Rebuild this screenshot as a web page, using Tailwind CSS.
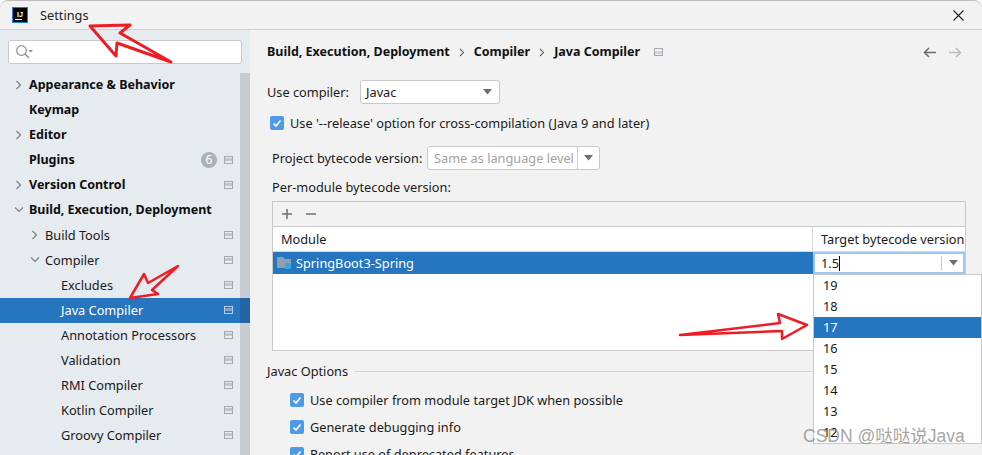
<!DOCTYPE html>
<html lang="en">
<head>
  <meta charset="UTF-8">
  <title>Settings</title>
  <script src="https://cdn.jsdelivr.net/npm/@tailwindcss/browser@4"></script>
</head>
<body class="relative w-[982px] h-[455px] overflow-hidden bg-white text-[12.75px] leading-[18px] text-[#1a1a1a] font-['Noto_Sans','Noto_Sans_CJK_SC',sans-serif]">

  <!-- Title bar -->
  <div class="h-[30px] flex items-center pl-[12px] pr-[18px] bg-[#f2f2f2] border-b border-t border-b-[#d1d1d1] border-t-[#bdbdbd] rounded-t-[8px]">
    <div class="w-[16px] h-[16px] bg-black border border-[#1a7de0] flex flex-col items-center justify-center">
      <span class="text-white text-[7px] leading-[7px] font-bold font-['Liberation_Sans',sans-serif]">IJ</span>
      <span class="w-[7px] h-px bg-white mt-[1px] self-start ml-[2px]"></span>
    </div>
    <span class="ml-[12px] text-[#222]">Settings</span>
    <svg class="ml-auto" width="11" height="11" viewBox="0 0 11 11"><path d="M0.5 0.5L10.5 10.5M10.5 0.5L0.5 10.5" stroke="#222" stroke-width="1.1" fill="none"/></svg>
  </div>

  <div class="flex h-[425px] bg-[#f2f2f2]">
    <!-- Sidebar -->
    <div class="w-[250px] shrink-0 bg-[#e6ebf0] relative">
      <div class="mx-[8px] mt-[10px] h-[24px] bg-white border border-[#c9c9c9] rounded-[3px] flex items-center pl-[6px]">
        <svg width="20" height="16" viewBox="0 0 20 16" fill="none"><circle cx="6.5" cy="6.5" r="4.8" stroke="#8a8f94" stroke-width="1.2"/><path d="M10 10l4 4" stroke="#8a8f94" stroke-width="1.4"/><path d="M13.5 6h4.5l-2.25 2.6z" fill="#8a8f94"/></svg>
      </div>

      <ul class="mt-[9px] [&>li]:pb-[2px]">
        <li class="h-[25px] flex items-center pl-[15px] pr-[17px] font-bold text-[12.5px] text-[#0d0d0d]">
          <svg width="8" height="10" viewBox="0 0 8 10" fill="none"><path d="M1.5 1l4 4-4 4" stroke="#7f7f7f" stroke-width="1.2"/></svg>
          <span class="ml-[6px]">Appearance &amp; Behavior</span>
        </li>
        <li class="h-[25px] flex items-center pl-[29px] pr-[17px] font-bold text-[12.5px] text-[#0d0d0d]">Keymap</li>
        <li class="h-[25px] flex items-center pl-[15px] pr-[17px] font-bold text-[12.5px] text-[#0d0d0d]">
          <svg width="8" height="10" viewBox="0 0 8 10" fill="none"><path d="M1.5 1l4 4-4 4" stroke="#7f7f7f" stroke-width="1.2"/></svg>
          <span class="ml-[6px]">Editor</span>
        </li>
        <li class="h-[25px] flex items-center pl-[29px] pr-[17px] font-bold text-[12.5px] text-[#0d0d0d]">
          <span>Plugins</span>
          <span class="ml-auto w-[16px] h-[16px] rounded-full bg-[#abb1b7] text-white text-[12px] font-normal flex items-center justify-center">6</span>
          <span class="ml-[7px] w-[9px] h-[8px] border border-[#a3a9af] flex items-center"><span class="w-full h-[3px] bg-[#c2c7cc]"></span></span>
        </li>
        <li class="h-[25px] flex items-center pl-[15px] pr-[17px] font-bold text-[12.5px] text-[#0d0d0d]">
          <svg width="8" height="10" viewBox="0 0 8 10" fill="none"><path d="M1.5 1l4 4-4 4" stroke="#7f7f7f" stroke-width="1.2"/></svg>
          <span class="ml-[6px]">Version Control</span>
          <span class="ml-auto w-[9px] h-[8px] border border-[#a3a9af] flex items-center"><span class="w-full h-[3px] bg-[#c2c7cc]"></span></span>
        </li>
        <li class="h-[25px] flex items-center pl-[14px] pr-[17px] font-bold text-[12.5px] text-[#0d0d0d]">
          <svg width="10" height="8" viewBox="0 0 10 8" fill="none"><path d="M1 1.5l4 4 4-4" stroke="#7f7f7f" stroke-width="1.2"/></svg>
          <span class="ml-[5px]">Build, Execution, Deployment</span>
        </li>
        <li class="h-[25px] flex items-center pl-[31px] pr-[17px]">
          <svg width="8" height="10" viewBox="0 0 8 10" fill="none"><path d="M1.5 1l4 4-4 4" stroke="#7f7f7f" stroke-width="1.2"/></svg>
          <span class="ml-[6px]">Build Tools</span>
          <span class="ml-auto w-[9px] h-[8px] border border-[#a3a9af] flex items-center"><span class="w-full h-[3px] bg-[#c2c7cc]"></span></span>
        </li>
        <li class="h-[25px] flex items-center pl-[30px] pr-[17px]">
          <svg width="10" height="8" viewBox="0 0 10 8" fill="none"><path d="M1 1.5l4 4 4-4" stroke="#7f7f7f" stroke-width="1.2"/></svg>
          <span class="ml-[5px]">Compiler</span>
          <span class="ml-auto w-[9px] h-[8px] border border-[#a3a9af] flex items-center"><span class="w-full h-[3px] bg-[#c2c7cc]"></span></span>
        </li>
        <li class="h-[25px] flex items-center pl-[61px] pr-[17px]">
          <span>Excludes</span>
          <span class="ml-auto w-[9px] h-[8px] border border-[#a3a9af] flex items-center"><span class="w-full h-[3px] bg-[#c2c7cc]"></span></span>
        </li>
        <li class="h-[25px] flex items-center pl-[61px] pr-[17px] bg-[#2675bf] text-white">
          <span>Java Compiler</span>
          <span class="ml-auto w-[9px] h-[8px] border border-[#b9cde2] flex items-center"><span class="w-full h-[3px] bg-[#7ea6cf]"></span></span>
        </li>
        <li class="h-[25px] flex items-center pl-[61px] pr-[17px]">
          <span>Annotation Processors</span>
          <span class="ml-auto w-[9px] h-[8px] border border-[#a3a9af] flex items-center"><span class="w-full h-[3px] bg-[#c2c7cc]"></span></span>
        </li>
        <li class="h-[25px] flex items-center pl-[61px] pr-[17px]">
          <span>Validation</span>
          <span class="ml-auto w-[9px] h-[8px] border border-[#a3a9af] flex items-center"><span class="w-full h-[3px] bg-[#c2c7cc]"></span></span>
        </li>
        <li class="h-[25px] flex items-center pl-[61px] pr-[17px]">
          <span>RMI Compiler</span>
          <span class="ml-auto w-[9px] h-[8px] border border-[#a3a9af] flex items-center"><span class="w-full h-[3px] bg-[#c2c7cc]"></span></span>
        </li>
        <li class="h-[25px] flex items-center pl-[61px] pr-[17px]">
          <span>Kotlin Compiler</span>
          <span class="ml-auto w-[9px] h-[8px] border border-[#a3a9af] flex items-center"><span class="w-full h-[3px] bg-[#c2c7cc]"></span></span>
        </li>
        <li class="h-[25px] flex items-center pl-[61px] pr-[17px]">
          <span>Groovy Compiler</span>
          <span class="ml-auto w-[9px] h-[8px] border border-[#a3a9af] flex items-center"><span class="w-full h-[3px] bg-[#c2c7cc]"></span></span>
        </li>
        <li class="h-[25px] flex items-center pl-[61px] pr-[17px]">
          <span>Layout</span>
        </li>
      </ul>

      <!-- scrollbar thumb, sits over the rows -->
      <div class="absolute right-0 top-[43px] bottom-0 w-[10px] bg-black/[0.13]"></div>
    </div>

    <!-- Main panel -->
    <div class="flex-1 min-w-0 pl-[17px]">
      <div class="h-[44px] flex items-center pr-[20px] font-bold text-[12.5px] text-[#111]">
        <span>Build, Execution, Deployment</span>
        <svg class="mx-[9px]" width="6" height="9" viewBox="0 0 6 9" fill="none"><path d="M1 1l3.5 3.5L1 8" stroke="#666" stroke-width="1.1"/></svg>
        <span>Compiler</span>
        <svg class="mx-[9px]" width="6" height="9" viewBox="0 0 6 9" fill="none"><path d="M1 1l3.5 3.5L1 8" stroke="#666" stroke-width="1.1"/></svg>
        <span>Java Compiler</span>
        <span class="ml-[14px] w-[9px] h-[8px] border border-[#a3a9af] flex items-center"><span class="w-full h-[3px] bg-[#d0d3d6]"></span></span>
        <svg class="ml-auto" width="13" height="11" viewBox="0 0 13 11" fill="none"><path d="M13 5.500H2M6 1L1.500 5.500 6 10" stroke="#6e6e6e" stroke-width="1.6"/></svg>
        <svg class="ml-[13px]" width="13" height="11" viewBox="0 0 13 11" fill="none"><path d="M0 5.500h11M7 1l4.500 4.500L7 10" stroke="#bdbdbd" stroke-width="1.6"/></svg>
      </div>

      <div class="flex items-center h-[24px] mt-[6px]">
        <span class="w-[93px]">Use compiler:</span>
        <div class="w-[140px] h-[24px] bg-white border border-[#c9c9c9] rounded-[3px] flex items-center pl-[5px] pr-[7px]">
          <span>Javac</span>
          <svg class="ml-auto" width="9" height="6" viewBox="0 0 9 6"><path d="M0 0h9L4.500 5.500z" fill="#6e6e6e"/></svg>
        </div>
      </div>

      <div class="flex items-center h-[18px] mt-[10px] pl-[3px]">
        <span class="w-[14px] h-[14px] rounded-[2px] bg-[#4d9be8] flex items-center justify-center">
          <svg width="10" height="9" viewBox="0 0 10 9" fill="none"><path d="M1.500 4.500l2.500 2.500 4.500-5.500" stroke="#fff" stroke-width="1.700"/></svg>
        </span>
        <span class="ml-[6px]">Use '--release' option for cross-compilation (Java 9 and later)</span>
      </div>

      <div class="flex items-center h-[24px] mt-[14px] pl-[5px]">
        <span class="w-[155px]">Project bytecode version:</span>
        <div class="w-[173px] h-[24px] bg-white border border-[#c9c9c9] rounded-[3px] flex items-center pl-[6px]">
          <span class="text-[#a3a3a3] whitespace-nowrap">Same as language level</span>
          <span class="ml-auto w-[22px] h-full border-l border-[#c9c9c9] flex items-center justify-center">
            <svg width="9" height="6" viewBox="0 0 9 6"><path d="M0 0h9L4.500 5.500z" fill="#6e6e6e"/></svg>
          </span>
        </div>
      </div>

      <div class="pl-[5px] mt-[8px] h-[18px] flex items-center">Per-module bytecode version:</div>

      <!-- Module table -->
      <div class="ml-[5px] mt-[5px] w-[694px] h-[150px] border border-[#c9c9c9] bg-white flex flex-col">
        <div class="h-[25px] bg-[#f2f2f2] border-b border-[#c9c9c9] flex items-center pl-[8px] gap-[12px] shrink-0">
          <svg width="12" height="12" viewBox="0 0 12 12"><path d="M6 1v10M1 6h10" stroke="#6e6e6e" stroke-width="1.500"/></svg>
          <svg width="12" height="12" viewBox="0 0 12 12"><path d="M1 6h10" stroke="#6e6e6e" stroke-width="1.500"/></svg>
        </div>
        <div class="h-[25px] flex border-b border-[#d8d8d8] shrink-0">
          <div class="w-[540px] pl-[8px] flex items-center border-r border-[#d8d8d8]">Module</div>
          <div class="flex-1 pl-[8px] flex items-center whitespace-nowrap overflow-hidden">Target bytecode version</div>
        </div>
        <div class="h-[22px] flex bg-[#2675bf] shrink-0">
          <div class="w-[540px] pl-[4px] flex items-center text-white">
            <svg width="15" height="14" viewBox="0 0 15 14"><path d="M0 1h6l2 2h6v9H0z" fill="#8f9eb0"/><rect x="8" y="7" width="6" height="6" fill="#3aa8e0"/></svg>
            <span class="ml-[4px]">SpringBoot3-Spring</span>
          </div>
          <div class="flex-1 bg-white border-2 border-[#9cc6ef] flex items-center pl-[6px] pr-[5px]">
            <span>1.5</span><span class="w-px h-[15px] bg-black"></span>
            <span class="ml-auto border-l border-[#c9c9c9] h-[14px] pl-[7px] flex items-center">
              <svg width="9" height="6" viewBox="0 0 9 6"><path d="M0 0h9L4.500 5.500z" fill="#6e6e6e"/></svg>
            </span>
          </div>
        </div>
      </div>

      <!-- Javac options -->
      <div class="flex items-center h-[18px] mt-[11px]">
        <span>Javac Options</span>
        <span class="ml-[6px] flex-1 h-px bg-[#d1d1d1]"></span>
      </div>
      <div class="flex items-center h-[18px] mt-[11px] pl-[23px]">
        <span class="w-[14px] h-[14px] rounded-[2px] bg-[#4d9be8] flex items-center justify-center">
          <svg width="10" height="9" viewBox="0 0 10 9" fill="none"><path d="M1.500 4.500l2.500 2.500 4.500-5.500" stroke="#fff" stroke-width="1.700"/></svg>
        </span>
        <span class="ml-[6px]">Use compiler from module target JDK when possible</span>
      </div>
      <div class="flex items-center h-[18px] mt-[9px] pl-[23px]">
        <span class="w-[14px] h-[14px] rounded-[2px] bg-[#4d9be8] flex items-center justify-center">
          <svg width="10" height="9" viewBox="0 0 10 9" fill="none"><path d="M1.500 4.500l2.500 2.500 4.500-5.500" stroke="#fff" stroke-width="1.700"/></svg>
        </span>
        <span class="ml-[6px]">Generate debugging info</span>
      </div>
      <div class="flex items-center h-[18px] mt-[9px] pl-[23px]">
        <span class="w-[14px] h-[14px] rounded-[2px] bg-[#4d9be8] flex items-center justify-center">
          <svg width="10" height="9" viewBox="0 0 10 9" fill="none"><path d="M1.500 4.500l2.500 2.500 4.500-5.500" stroke="#fff" stroke-width="1.700"/></svg>
        </span>
        <span class="ml-[6px]">Report use of deprecated features</span>
      </div>
    </div>
  </div>

  <!-- Version popup -->
  <ul class="absolute left-[813px] top-[274px] w-[169px] h-[170px] bg-white border border-[#c9c9c9] overflow-hidden [&>li]:pb-[2px]">
    <li class="h-[21px] pl-[9px] flex items-center">19</li>
    <li class="h-[21px] pl-[9px] flex items-center">18</li>
    <li class="h-[21px] pl-[9px] flex items-center bg-[#2675bf] text-white">17</li>
    <li class="h-[21px] pl-[9px] flex items-center">16</li>
    <li class="h-[21px] pl-[9px] flex items-center">15</li>
    <li class="h-[21px] pl-[9px] flex items-center">14</li>
    <li class="h-[21px] pl-[9px] flex items-center">13</li>
    <li class="h-[21px] pl-[9px] flex items-center">12</li>
  </ul>

  <!-- Red annotation arrows -->
  <svg class="absolute inset-0 pointer-events-none" width="982" height="455" viewBox="0 0 982 455" fill="none" stroke="#ee1c25" stroke-linejoin="round">
    <path stroke-width="3" d="M90 26L130 25L120 33L171 62L117 43L116 56Z"/>
    <path stroke-width="2.500" d="M130 298L144 274L148 283L178 266L152 290L158 294Z"/>
    <path stroke-width="2.500" d="M680 335L780 323L778 314L807 325L782 339L782 331Z"/>
  </svg>

  <!-- Watermark -->
  <div class="absolute left-[803px] top-[425px] text-[17.5px] leading-[22px] text-[#8c8c8c]/80 font-['Liberation_Sans','Noto_Sans_CJK_SC',sans-serif] whitespace-nowrap">CSDN @哒哒说Java</div>
</body>
</html>
